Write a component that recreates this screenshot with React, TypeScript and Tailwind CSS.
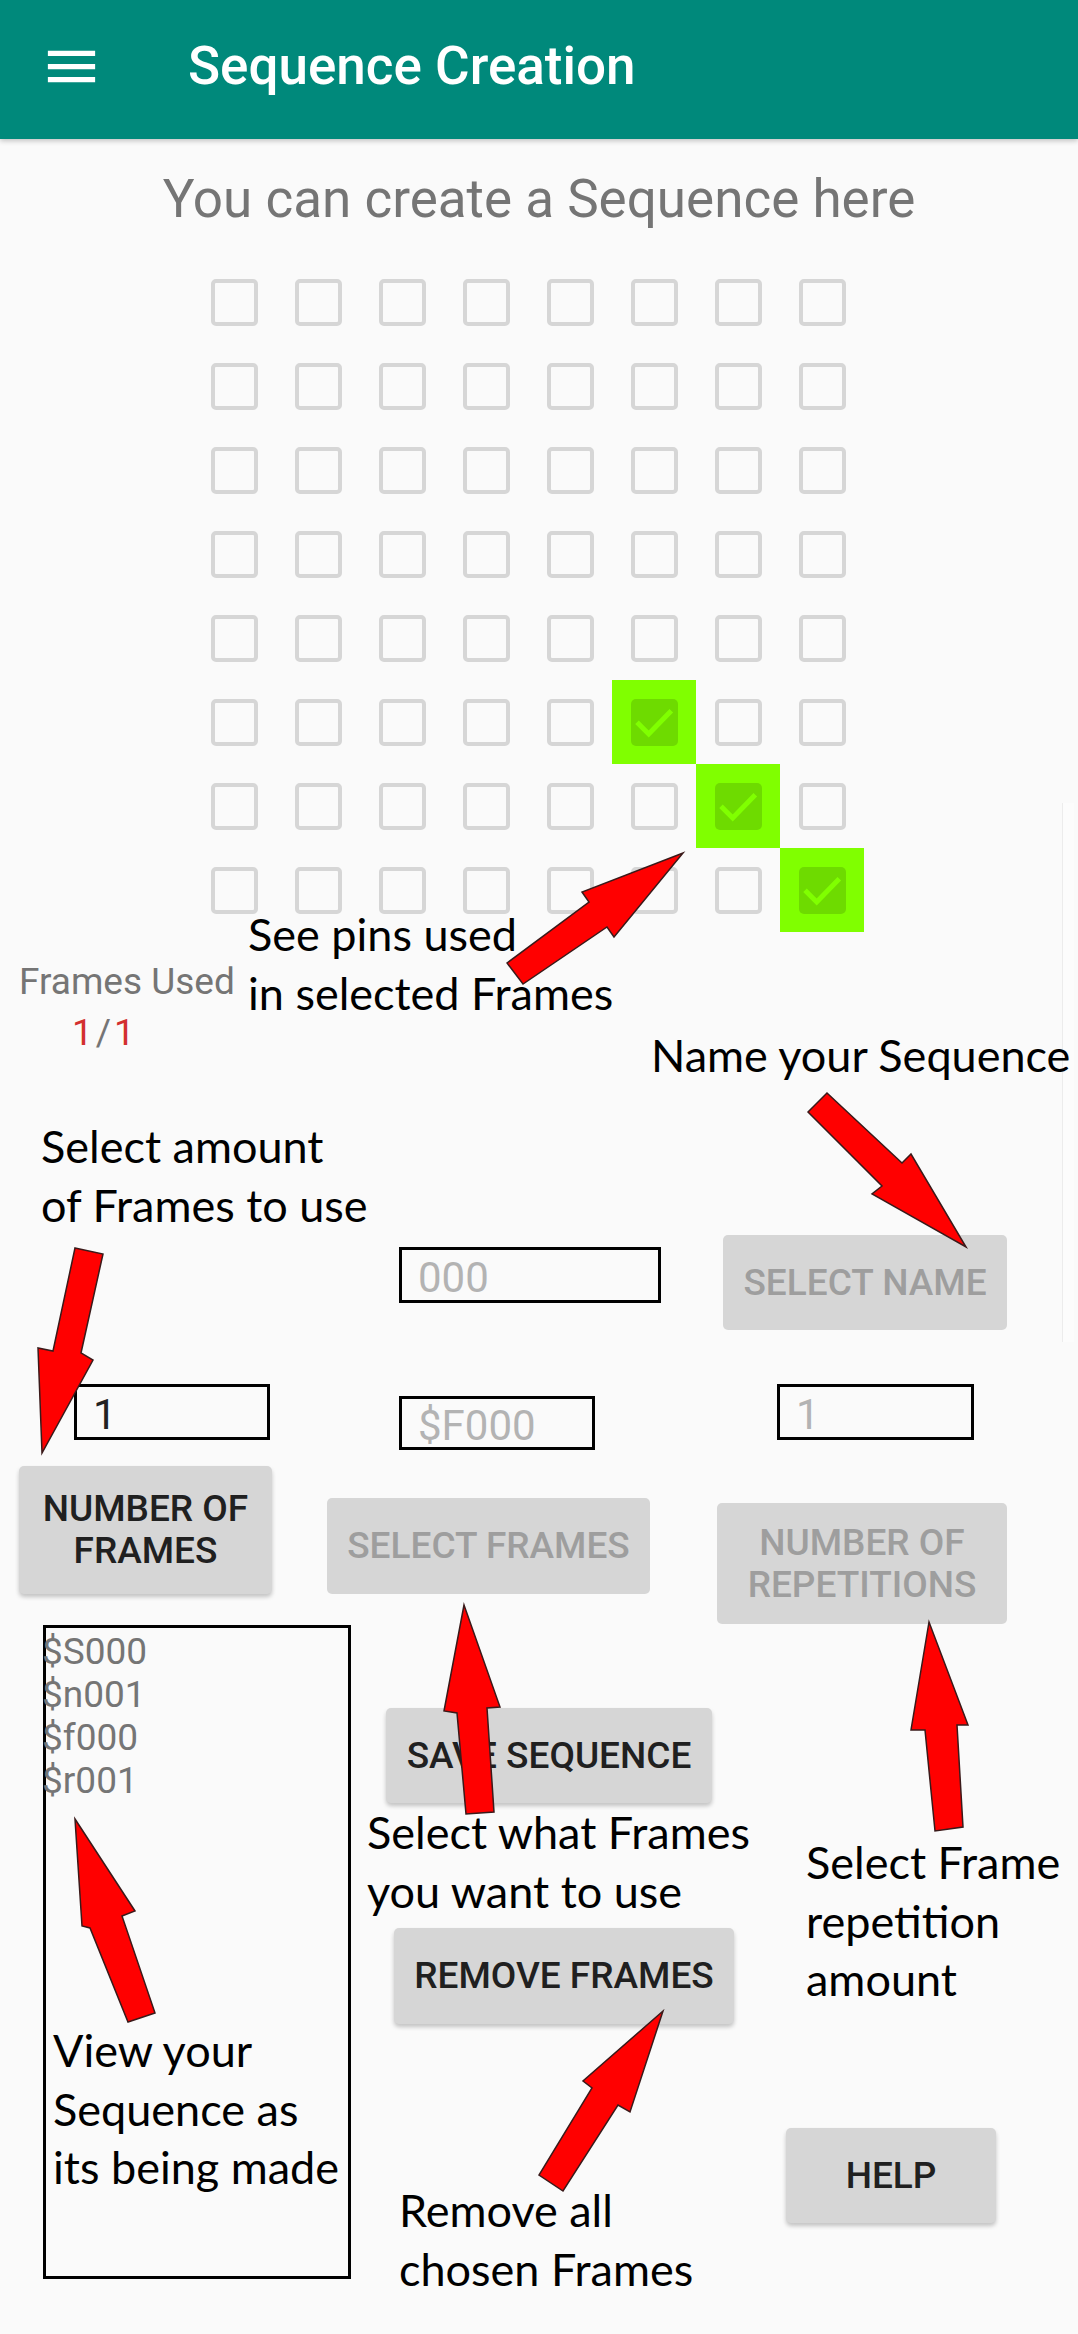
import clsx from "clsx";

const checked = new Set(["5-5", "6-6", "7-7"]);

function PinBox({ on }: { on: boolean }) {
  return (
    <div
      className={clsx(
        "flex h-[84px] w-[84px] items-center justify-center",
        on && "bg-[#80ff00]"
      )}
    >
      {on ? (
        <svg width="47" height="47" viewBox="0 0 47 47">
          <rect width="47" height="47" rx="5" fill="#6edb00" />
          <path
            d="M6 23.3 L17.7 35 L40.3 11.7"
            fill="none"
            stroke="#80ff00"
            strokeWidth="5"
          />
        </svg>
      ) : (
        <div className="h-[47px] w-[47px] rounded-[5px] border-[4px] border-[#d6d6d6]" />
      )}
    </div>
  );
}

function Btn({
  label,
  enabled,
  className,
}: {
  label: React.ReactNode;
  enabled?: boolean;
  className?: string;
}) {
  return (
    <div
      className={clsx(
        "flex shrink-0 items-center justify-center rounded-[5px] bg-[#d6d6d6] text-center text-[37px] font-medium uppercase leading-[42px]",
        enabled
          ? "text-[#202020] shadow-[0_3px_4px_rgba(0,0,0,0.22)]"
          : "text-[#9e9e9e]",
        className
      )}
    >
      {label}
    </div>
  );
}

function Field({
  value,
  hint,
  className,
}: {
  value: string;
  hint?: boolean;
  className?: string;
}) {
  return (
    <div
      className={clsx(
        "flex shrink-0 items-center border-[3px] border-black pl-[16px] pt-[5px] text-[42px] leading-none",
        hint ? "text-[#b3b3b3]" : "text-[#222222]",
        className
      )}
    >
      {value}
    </div>
  );
}

// annotation overlays drawn on top of the screenshot
const notes = [
  { x: 248, y: 905, lines: ["See pins used", "in selected Frames"] },
  { x: 651, y: 1026, lines: ["Name your Sequence"] },
  { x: 41, y: 1117, lines: ["Select amount", "of Frames to use"] },
  { x: 367, y: 1803, lines: ["Select what Frames", "you want to use"] },
  { x: 806, y: 1833, lines: ["Select Frame", "repetition", "amount"] },
  { x: 53, y: 2021, lines: ["View your", "Sequence as", "its being made"] },
  { x: 399, y: 2181, lines: ["Remove all", "chosen Frames"] },
];

const arrows = [
  "507,963 589,902 582,892 683,853 614,937 607,927 523,984",
  "808,1112 827,1093 902,1163 911,1154 966,1247 872,1194 882,1186",
  "75,1248 103,1254 81,1353 93,1360 42,1453 38,1348 53,1351",
  "464,1605 500,1707 487,1708 494,1812 466,1814 457,1713 444,1711",
  "929,1622 968,1725 957,1725 963,1827 935,1831 925,1730 911,1730",
  "75,1819 135,1911 122,1916 155,2013 128,2022 90,1928 82,1926",
  "663,2011 630,2112 618,2105 563,2191 539,2175 592,2088 583,2081",
];

export default function App() {
  return (
    <div className="relative h-[2334px] w-[1078px] overflow-hidden bg-[#fafafa] font-['Roboto',sans-serif]">
      {/* toolbar */}
      <header className="relative z-10 flex h-[139px] items-center bg-[#00897b] pb-[6px] shadow-[0_2px_5px_rgba(0,0,0,0.22)]">
        <svg className="ml-[40px]" width="63" height="63" viewBox="0 0 24 24">
          <path d="M3 18h18v-2H3v2zm0-5h18v-2H3v2zm0-7v2h18V6H3z" fill="#fff" />
        </svg>
        <h1 className="ml-[85px] text-[53px] font-medium leading-none text-white">
          Sequence Creation
        </h1>
      </header>

      <p className="mt-[29px] text-center text-[53px] leading-[62px] text-[#757575]">
        You can create a Sequence here
      </p>

      <div className="ml-[192px] mt-[30px] grid w-[672px] grid-cols-8">
        {Array.from({ length: 64 }, (_, i) => (
          <PinBox key={i} on={checked.has(`${Math.floor(i / 8)}-${i % 8}`)} />
        ))}
      </div>

      <div className="ml-[19px] mt-[28px] text-[37px] leading-[43px] text-[#757575]">
        Frames Used
      </div>
      <div className="ml-[72px] mt-[8px] text-[37px] leading-[43px]">
        <span className="text-[#d32f2f]">1</span>
        <span className="mx-[3px] text-[#757575]">/</span>
        <span className="text-[#d32f2f]">1</span>
      </div>

      {/* name row */}
      <div className="mt-[181px] flex items-start">
        <Field value="000" hint className="ml-[399px] mt-[12px] h-[56px] w-[262px]" />
        <Btn label="Select Name" className="ml-[62px] h-[95px] w-[284px]" />
      </div>

      {/* value row */}
      <div className="mt-[54px] flex items-start">
        <Field value="1" className="ml-[74px] h-[56px] w-[196px]" />
        <Field value="$F000" hint className="ml-[129px] mt-[12px] h-[54px] w-[196px]" />
        <Field value="1" hint className="ml-[182px] h-[56px] w-[197px]" />
      </div>

      {/* action row */}
      <div className="mt-[16px] flex items-start">
        <Btn
          enabled
          label={
            <>
              Number of
              <br />
              Frames
            </>
          }
          className="ml-[19px] h-[128px] w-[253px]"
        />
        <Btn label="Select Frames" className="ml-[55px] mt-[32px] h-[96px] w-[323px]" />
        <Btn
          label={
            <>
              Number of
              <br />
              Repetitions
            </>
          }
          className="ml-[67px] mt-[37px] h-[121px] w-[290px]"
        />
      </div>

      <div className="mt-[1px] flex items-start">
        <div className="ml-[43px] h-[654px] w-[308px] shrink-0 border-[3px] border-black pt-[2px]">
          <div className="-ml-[4px] text-[37px] leading-[43px] text-[#757575]">
            <div>$S000</div>
            <div>$n001</div>
            <div>$f000</div>
            <div>$r001</div>
          </div>
        </div>
        <div className="ml-[35px] flex flex-col items-start">
          <Btn enabled label="Save Sequence" className="mt-[83px] h-[95px] w-[326px]" />
          <Btn enabled label="Remove Frames" className="ml-[8px] mt-[125px] h-[96px] w-[340px]" />
          <Btn enabled label="Help" className="ml-[400px] mt-[104px] h-[95px] w-[210px]" />
        </div>
      </div>

      {/* faint edge of neighbouring view */}
      <div className="absolute left-[1062px] top-[803px] h-[539px] w-[12px] border-l border-[#ececec] bg-[#fcfcfc]" />

      <svg
        className="pointer-events-none absolute left-0 top-0"
        width="1078"
        height="2334"
        viewBox="0 0 1078 2334"
      >
        {arrows.map((p, i) => (
          <polygon
            key={i}
            points={p}
            fill="#ff0000"
            stroke="#3a1a1a"
            strokeWidth="1.5"
            strokeLinejoin="miter"
          />
        ))}
      </svg>

      {notes.map((n, i) => (
        <div
          key={i}
          className="pointer-events-none absolute whitespace-nowrap font-['Lato',sans-serif] text-[45px] leading-[58.5px] text-black"
          style={{ left: n.x, top: n.y }}
        >
          {n.lines.map((l) => (
            <div key={l}>{l}</div>
          ))}
        </div>
      ))}
    </div>
  );
}
